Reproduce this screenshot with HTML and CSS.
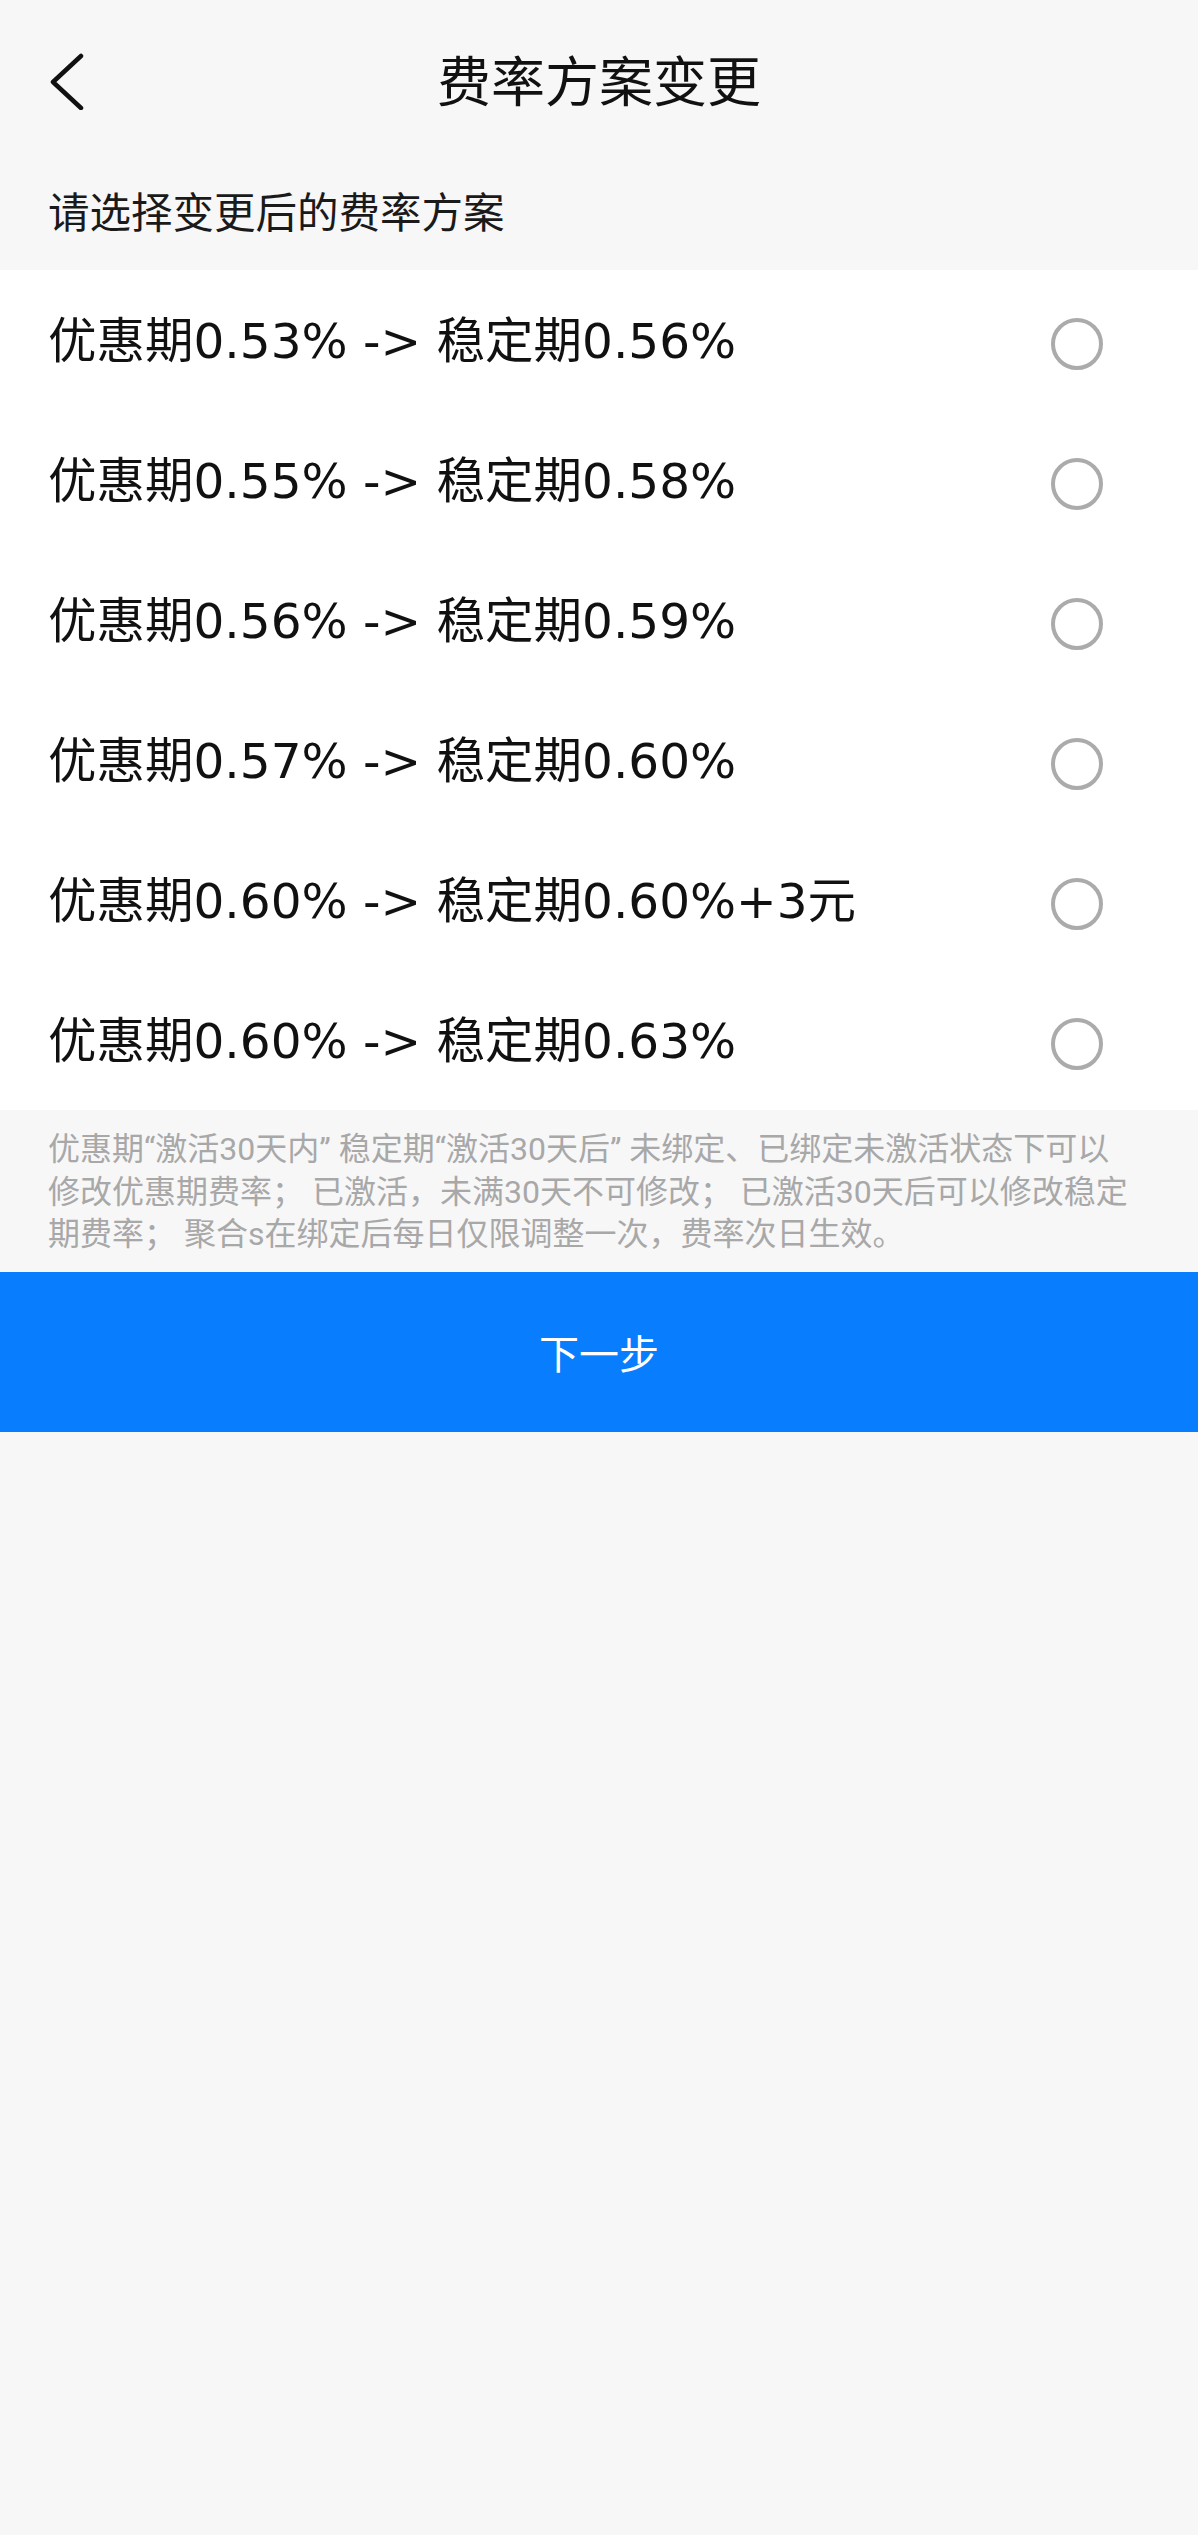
FILE: index.html
```html
<!DOCTYPE html>
<html>
  <head>
    <meta charset="UTF-8">
    <title>费率方案变更</title>
    <link rel="stylesheet" href="styles.css">
  </head>
  <body>
    <div id="title-bar">
      <div class="back-btn">
        <svg width="40" height="60" viewBox="0 0 40 60">
          <polyline points="33,6 5,32 33,58" fill="none" stroke="#111" stroke-width="4.5" stroke-linecap="round" stroke-linejoin="round"/>
        </svg>
      </div>
      <div id="title">费率方案变更</div>
      <div></div>
    </div>

    <div class="hint">请选择变更后的费率方案</div>

    <div class="plan-list">
      <div class="plan">
        <span class="plan-text">优惠期0.53% -&gt; 稳定期0.56%</span>
        <span class="radio"></span>
      </div>
      <div class="plan">
        <span class="plan-text">优惠期0.55% -&gt; 稳定期0.58%</span>
        <span class="radio"></span>
      </div>
      <div class="plan">
        <span class="plan-text">优惠期0.56% -&gt; 稳定期0.59%</span>
        <span class="radio"></span>
      </div>
      <div class="plan">
        <span class="plan-text">优惠期0.57% -&gt; 稳定期0.60%</span>
        <span class="radio"></span>
      </div>
      <div class="plan">
        <span class="plan-text">优惠期0.60% -&gt; 稳定期0.60%+3元</span>
        <span class="radio"></span>
      </div>
      <div class="plan">
        <span class="plan-text">优惠期0.60% -&gt; 稳定期0.63%</span>
        <span class="radio"></span>
      </div>
    </div>

    <div class="notes">优惠期“激活30天内” 稳定期“激活30天后” 未绑定、已绑定未激活状态下可以修改优惠期费率； 已激活，未满30天不可修改； 已激活30天后可以修改稳定期费率； 聚合s在绑定后每日仅限调整一次，费率次日生效。</div>

    <button id="next-btn" class="button">下一步</button>
  </body>
</html>
```

FILE: styles.css
```css
body {
  background-color: #f7f7f7;
  font-family: "DejaVu Sans", "Noto Sans CJK SC", sans-serif;
  color: #111;
  padding: 0px;
  margin: 0px;
}

#title-bar {
  height: 156px;
  display: grid;
  grid-template-columns: 1fr auto 1fr;
  align-items: center;
}

.back-btn {
  padding-left: 48px;
  padding-top: 4px;
  display: flex;
  align-items: center;
}

#title {
  font-size: 54px;
  color: #111;
}

.hint {
  height: 114px;
  padding: 0 48px;
  display: flex;
  align-items: center;
  font-size: 41.5px;
  color: #1a1a1a;
  box-sizing: border-box;
  padding-bottom: 6px;
}

.plan-list {
  background-color: #fff;
}

.plan {
  height: 140px;
  padding: 0 95px 0 48px;
  display: flex;
  align-items: center;
  justify-content: space-between;
}

.plan-text {
  font-size: 48.5px;
  color: #111;
  margin-bottom: 6px;
}

.radio {
  width: 52px;
  height: 52px;
  border: 4px solid #ababab;
  border-radius: 50%;
  box-sizing: border-box;
  margin-top: 8px;
}

.notes {
  padding: 18px 64px 16px 48px;
  font-family: Roboto, "Noto Sans CJK SC", sans-serif;
  font-size: 32px;
  line-height: 42.5px;
  color: #a8a8a8;
}

.button {
  display: block;
  width: 100%;
  height: 160px;
  background-color: #087dfe;
  border: none;
  color: white;
  font-family: "DejaVu Sans", "Noto Sans CJK SC", sans-serif;
  font-size: 40px;
  text-align: center;
  cursor: pointer;
  padding: 0;
}
```
